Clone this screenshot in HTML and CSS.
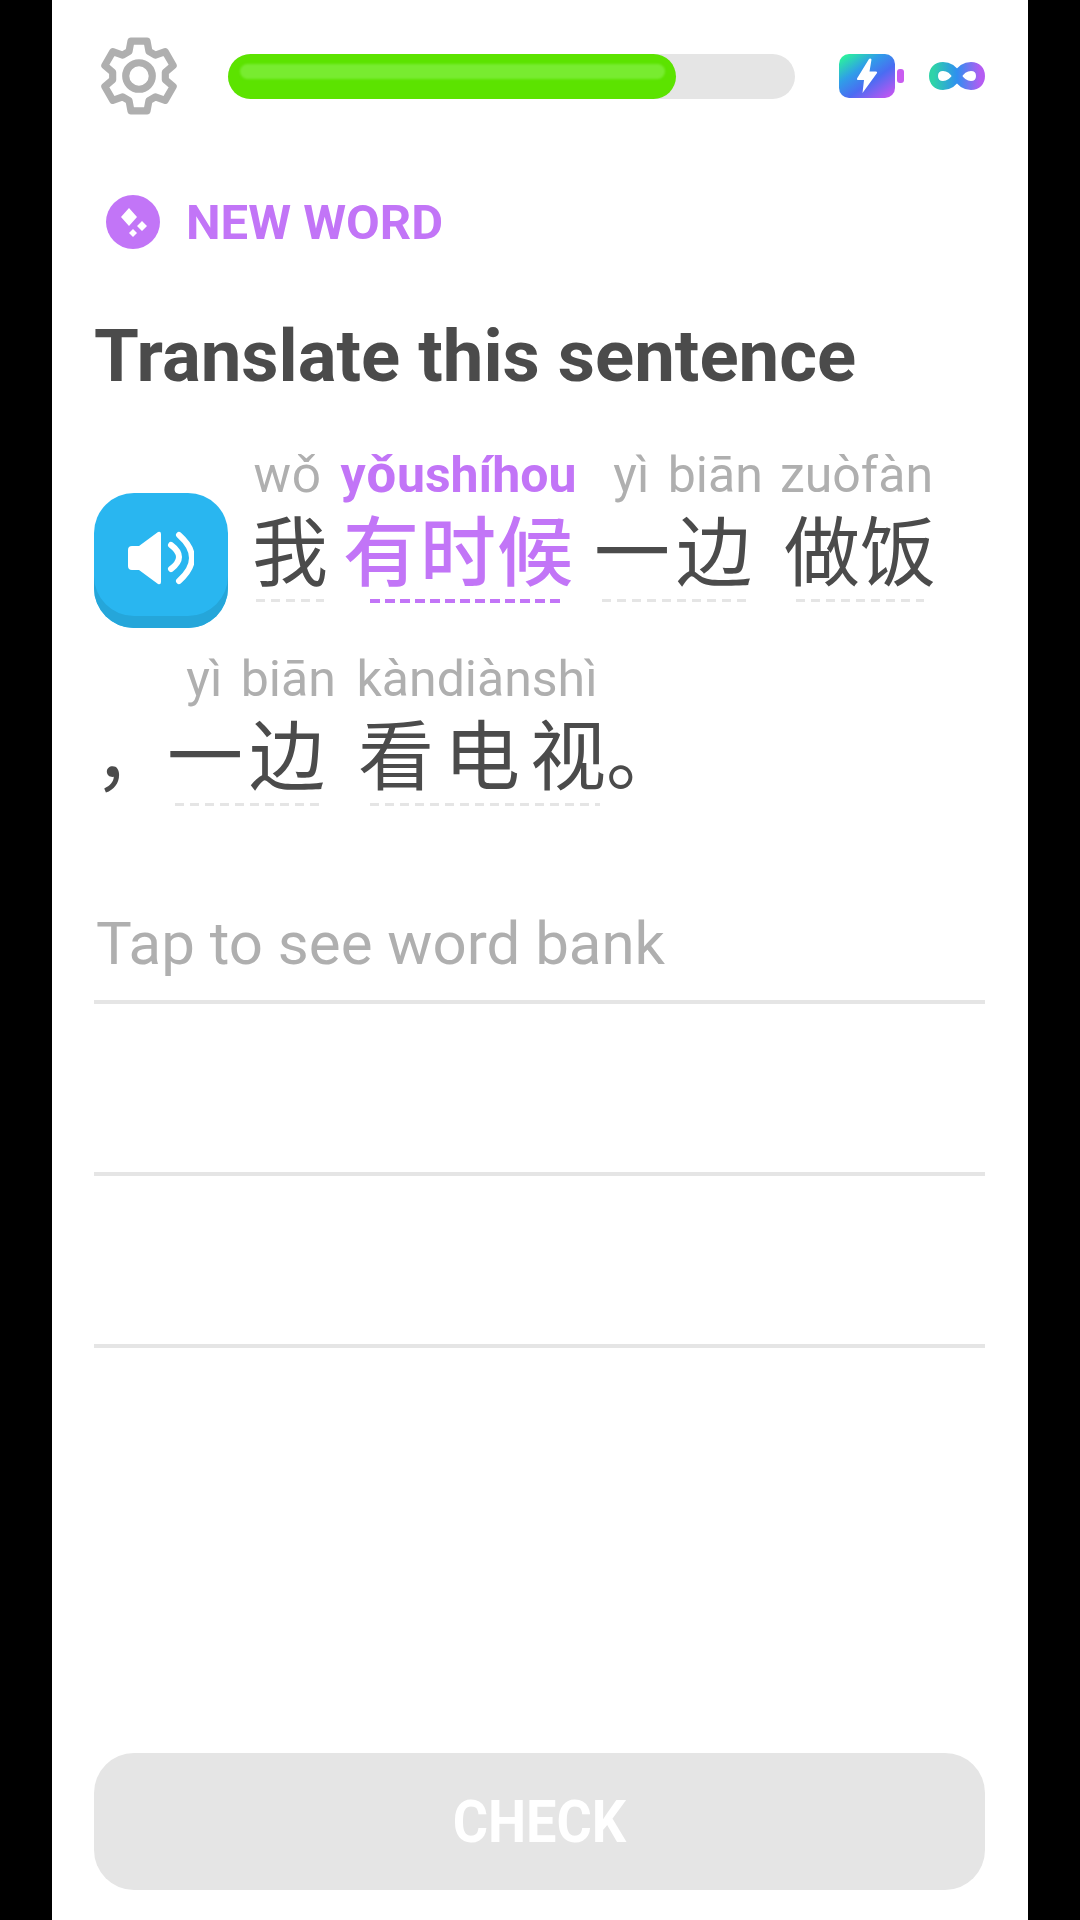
FILE: index.html
```html
<!DOCTYPE html>
<html lang="zh-CN">
<head>
<meta charset="utf-8">
<title>Translate this sentence</title>
<link rel="stylesheet" href="styles.css">
</head>
<body>
<main class="panel">
  <header class="top">
    <svg class="gear" viewBox="-45 -45 90 90" aria-hidden="true">
      <path class="gear-line" d="M-9.74-24.11L-7.87-34.1L7.87-34.1L9.74-24.11L16.01-20.49L25.6-23.87L33.47-10.23L25.75-3.62L25.75 3.62L33.47 10.23L25.6 23.87L16.01 20.49L9.74 24.11L7.87 34.1L-7.87 34.1L-9.74 24.11L-16.01 20.49L-25.6 23.87L-33.47 10.23L-25.75 3.62L-25.75-3.62L-33.47-10.23L-25.6-23.87L-16.01-20.49Z"/>
      <circle class="gear-line" cx="0" cy="0" r="13"/>
    </svg>
    <div class="track"><div class="fill" style="width:79%"><span class="shine"></span></div></div>
    <div class="battery">
      <svg class="bolt" viewBox="0 0 24 36" aria-hidden="true"><path d="M14 1L2 20.5Q1.5 22 3.2 22H9L7.5 35L22 15Q22.6 13.5 21 13.5H14.5L16.5 1.5Q15.5 0 14 1Z"/></svg>
    </div>
    <span class="nub"></span>
    <svg class="infinity" viewBox="0 0 56 28" aria-hidden="true">
      <defs><linearGradient id="inf" x1="0" y1="0" x2="1" y2="0"><stop offset="0" stop-color="#2ed3a8"/><stop offset=".5" stop-color="#2f8ff0"/><stop offset="1" stop-color="#b45cf2"/></linearGradient></defs>
      <path fill="none" stroke="url(#inf)" stroke-width="9" d="M28 14C24 7 19 4.500 14 4.500C8 4.500 4.500 8.500 4.500 14C4.500 19.500 8 23.500 14 23.500C19 23.500 24 21 28 14C32 7 37 4.500 42 4.500C48 4.500 51.500 8.500 51.500 14C51.500 19.500 48 23.500 42 23.500C37 23.500 32 21 28 14Z"/>
    </svg>
  </header>

  <div class="tag">
    <svg class="tag-icon" viewBox="0 0 54 54" aria-hidden="true">
      <circle cx="27" cy="27" r="27" fill="#c275f7"/>
      <path fill="#fff" d="M23 13L31 22L23 31L15 22ZM36 26L41 31L36 36L31 31ZM27 34L31 38L27 42L23 38Z"/>
    </svg>
    <span class="tag-text">NEW WORD</span>
  </div>

  <h1 class="title">Translate this sentence</h1>

  <section class="sentence">
    <div class="line line-first">
      <div class="speaker">
        <svg class="speaker-icon" viewBox="0 0 66 56" aria-hidden="true">
          <path class="cone" d="M4 16H11L30 2Q33 1 33 4V52Q33 55 30 54L11 40H4Q0 40 0 36V20Q0 16 4 16Z"/>
          <path class="wave" d="M43 15Q59 27 43 39"/>
          <path class="wave" d="M51 5Q77 28 51 51"/>
        </svg>
      </div>
      <div class="word w-wo"><span class="py">wǒ</span><span class="zh">我</span><span class="dash"></span></div>
      <div class="word w-you new"><span class="py">yǒushíhou</span><span class="zh">有时候</span><span class="dash"></span></div>
      <div class="word w-yibian"><span class="py py-gap">yì biān</span><span class="zh zh-pair">一边</span><span class="dash"></span></div>
      <div class="word w-zuofan"><span class="py">zuòfàn</span><span class="zh">做饭</span><span class="dash"></span></div>
    </div>
    <div class="line line-second">
      <span class="zh punct">，</span>
      <div class="word w-yibian2"><span class="py py-gap">yì biān</span><span class="zh zh-pair">一边</span><span class="dash"></span></div>
      <div class="word w-kan"><span class="py">kàndiànshì</span><span class="zh zh-wide">看电视</span><span class="dash"></span></div>
      <span class="zh punct stop">。</span>
    </div>
  </section>

  <section class="answer">
    <div class="rule rule-first">Tap to see word bank</div>
    <div class="rule"></div>
    <div class="rule"></div>
  </section>

  <button class="check" type="button"><span class="check-label">CHECK</span></button>
</main>
</body>
</html>
```

FILE: styles.css
```css
* { box-sizing: border-box; }
html, body { margin: 0; padding: 0; }
body { background: #000; font-family: Roboto, "Noto Sans", "Noto Sans CJK SC", sans-serif; }

.panel {
  width: 976px;
  height: 1920px;
  margin: 0 auto;
  padding: 0 43px 30px 42px;
  background: #fff;
  display: flex;
  flex-direction: column;
}

.top { display: flex; align-items: center; height: 152px; }
.gear { width: 92px; height: 92px; margin-left: -1px; flex: none; }
.gear-line { fill: none; stroke: #afafaf; stroke-width: 7; stroke-linejoin: round; }
.track { width: 567px; height: 45px; margin-left: 43px; border-radius: 23px; background: #e5e5e5; flex: none; }
.fill { height: 45px; padding: 10px 11px 0 12px; border-radius: 23px; background: #5ce300; }
.shine { display: block; height: 15px; border-radius: 8px; background: #78ec30; filter: blur(1px); }
.battery {
  width: 56px; height: 44px; margin-left: 44px; flex: none;
  border-radius: 10px;
  background: linear-gradient(145deg, #2bf59a 5%, #2f9ee8 35%, #4a6cf2 60%, #d552f2 100%);
  display: flex; align-items: center; justify-content: center;
}
.bolt { width: 24px; height: 36px; fill: #fff; }
.nub { width: 7px; height: 14px; margin-left: 2px; border-radius: 3px; background: #c95cf0; flex: none; }
.infinity { width: 56px; height: 28px; margin-left: 25px; flex: none; }

.tag { display: flex; align-items: center; gap: 26px; height: 54px; margin: 43px 0 0 12px; }
.tag-icon { width: 54px; height: 54px; flex: none; }
.tag-text { color: #c275f7; font-size: 49px; font-weight: 700; white-space: nowrap; }

.title { margin: 68px 0 0; height: 80px; line-height: 80px; color: #4b4b4b; font-size: 72.500px; font-weight: 700; white-space: nowrap; }

.sentence { margin-top: 48px; }
.line { display: flex; align-items: flex-start; height: 204px; }
.speaker {
  width: 134px; height: 135px; margin: 48px 24px 0 0; flex: none;
  border-radius: 40px;
  background: #29b6f0;
  box-shadow: inset 0 -12px 0 #25a6da;
  display: flex; align-items: center; justify-content: center;
  padding-bottom: 6px;
}
.speaker-icon { width: 66px; height: 56px; }
.cone { fill: #fff; }
.wave { fill: none; stroke: #fff; stroke-width: 6; stroke-linecap: round; }

.word { display: flex; flex-direction: column; flex: none; }
.py {
  width: 0; min-width: 100%;
  height: 60px; line-height: 60px;
  display: flex; justify-content: center;
  color: #afafaf; font-size: 50px; white-space: pre;
}
.py-gap { word-spacing: 6px; padding-left: 24px; }
.zh {
  display: block;
  height: 84px; line-height: 84px;
  color: #4b4b4b;
  font-family: "Noto Sans CJK SC", sans-serif;
  font-size: 76px;
  white-space: nowrap;
}
.zh-pair { letter-spacing: 6px; }
.zh-wide { letter-spacing: 10px; }
.dash {
  height: 3px; margin-top: 10px;
  background: repeating-linear-gradient(90deg, #e5e5e5 0 9px, transparent 9px 15px);
}

.new .py { color: #c275f7; font-weight: 700; }
.new .zh { color: #c275f7; font-weight: 500; letter-spacing: 1px; }
.new .dash { height: 4px; background: repeating-linear-gradient(90deg, #c275f7 0 10px, transparent 10px 15px); }

.w-wo { margin-right: 15px; }
.w-wo .py { padding-right: 5px; }
.w-wo .dash { margin-left: 4px; margin-right: 4px; }
.w-you { margin-right: 20px; }
.w-you .dash { margin-left: 27px; margin-right: 10px; }
.w-yibian { margin-right: 26px; }
.w-yibian .dash, .w-yibian2 .dash { margin-left: 8px; margin-right: 8px; }
.w-zuofan .py { padding-right: 7px; }
.w-zuofan .dash { margin-left: 12px; margin-right: 12px; }

.line-second .punct { margin-top: 60px; width: 73px; flex: none; }
.line-second .stop { width: auto; margin-left: -10px; }
.w-yibian2 { margin-right: 27px; }
.w-kan .py { padding-right: 20px; }
.w-kan .dash { margin-left: 12px; margin-right: 16px; }

.answer { margin-top: -21px; }
.rule { height: 172px; border-bottom: 4px solid #e5e5e5; }
.rule-first {
  display: flex; align-items: flex-end; padding: 0 0 21px 2px;
  color: #afafaf; font-size: 60px;
}

.check {
  width: 100%; height: 137px; margin-top: auto;
  border: 0; border-radius: 40px;
  background: #e5e5e5; color: #fff;
  font-family: Roboto, sans-serif; font-size: 60px; font-weight: 700;
}
.check-label { display: inline-block; transform: scaleX(0.9); }
```
